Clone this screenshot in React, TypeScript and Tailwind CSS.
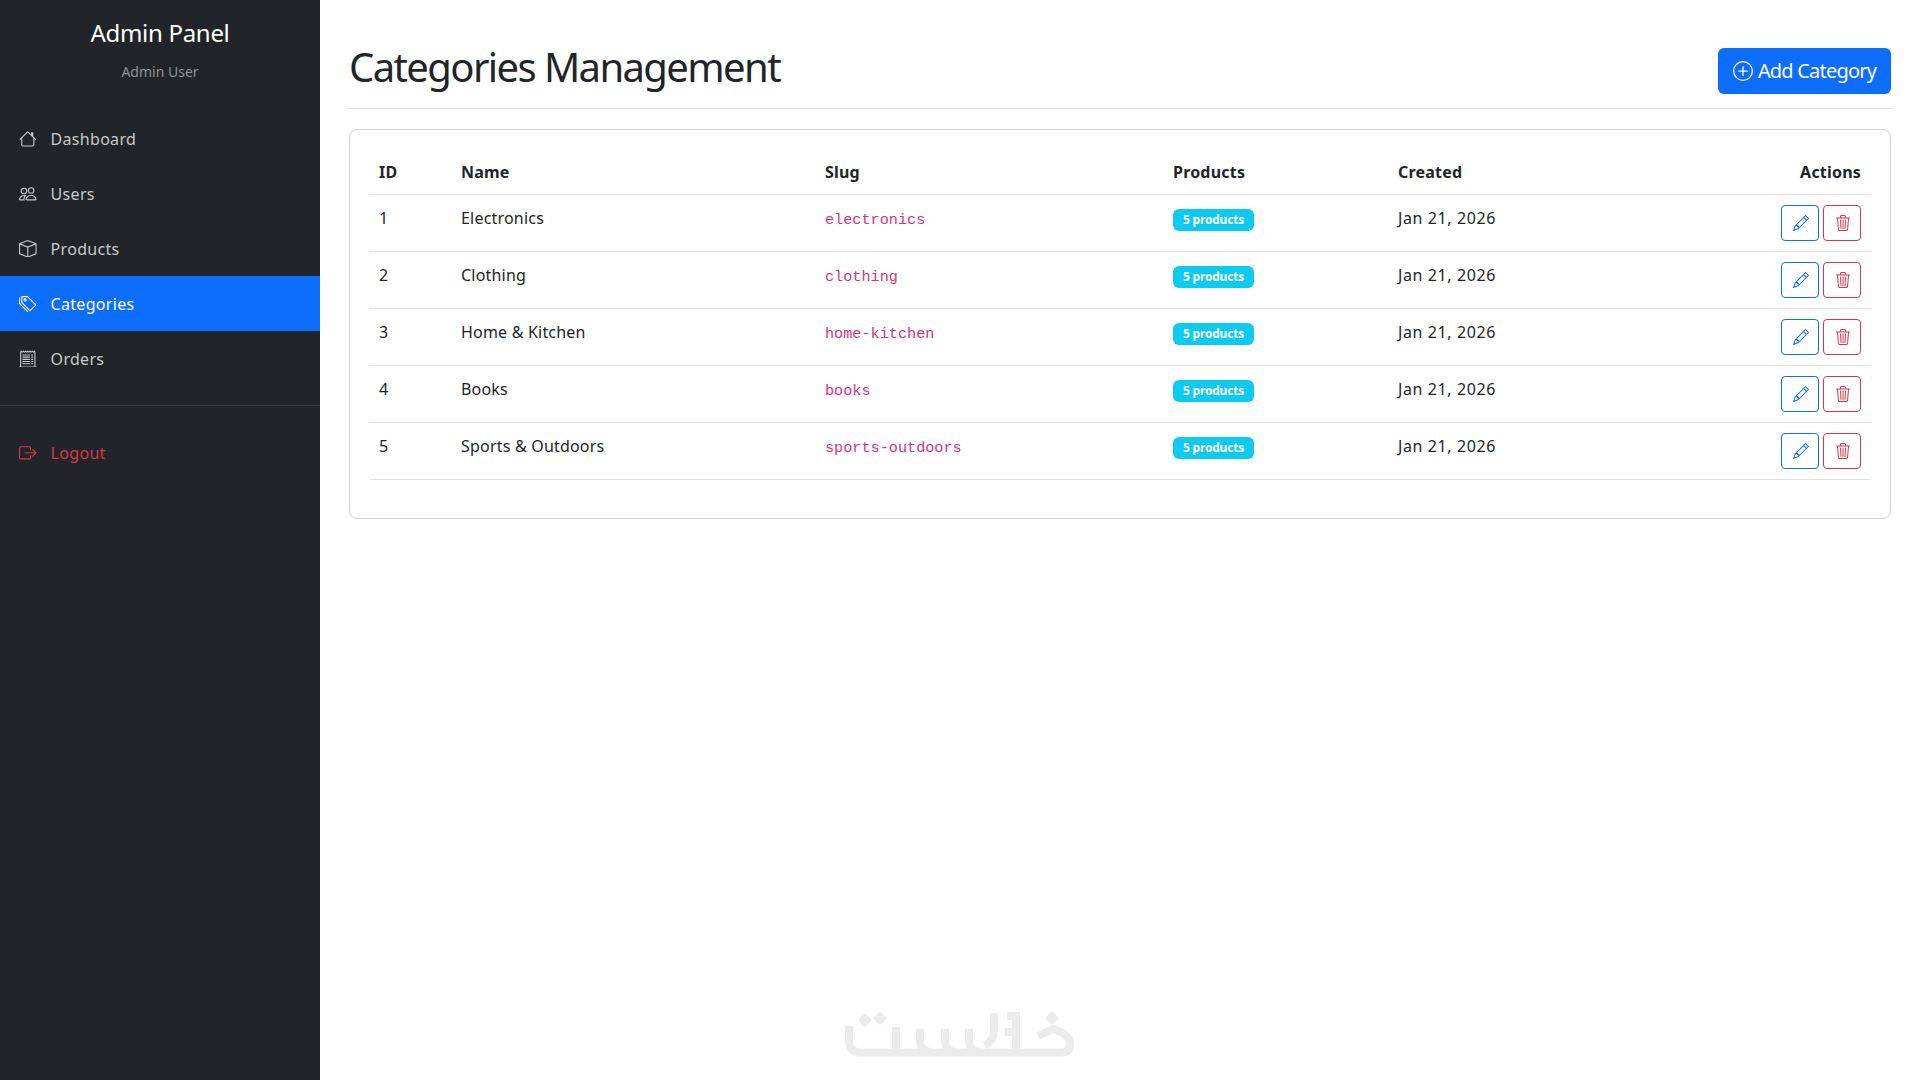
import { BsHouse, BsPeople, BsBox, BsTags, BsReceiptCutoff, BsBoxArrowRight, BsPlusCircle, BsPencil, BsTrash3 } from "react-icons/bs";

const nav = [
  { label: "Dashboard", Icon: BsHouse },
  { label: "Users", Icon: BsPeople },
  { label: "Products", Icon: BsBox },
  { label: "Categories", Icon: BsTags, active: true },
  { label: "Orders", Icon: BsReceiptCutoff },
];

const rows = [
  { id: 1, name: "Electronics", slug: "electronics" },
  { id: 2, name: "Clothing", slug: "clothing" },
  { id: 3, name: "Home & Kitchen", slug: "home-kitchen" },
  { id: 4, name: "Books", slug: "books" },
  { id: 5, name: "Sports & Outdoors", slug: "sports-outdoors" },
];

function Watermark() {
  return (
    <svg width="230" height="46" viewBox="0 0 230 46" fill="none" stroke="#ebebeb" strokeWidth="8">
      <path d="M4 14V28Q4 40.5 16 40.5H216Q225 40.5 225 32Q225 22 208 17L193 24" />
      <path d="M51 15V40M75 17V28Q75 40 87 40M100 17V28Q100 40 112 40M124 17V28Q124 40 136 40" />
      <path d="M149 1V18Q149 28 140 34M162 4H171V44M160 20H171" />
      <path d="M20 1l7 7-7 7-7-7zM35 -1l7 7-7 7-7-7zM207 -1l7 7-7 7-7-7z" fill="#ebebeb" stroke="none" />
    </svg>
  );
}

export default function App() {
  return (
    <div className="flex min-h-screen bg-white text-[#212529] font-['Noto_Sans',sans-serif] text-base leading-6">
      <aside className="w-[320px] shrink-0 bg-[#212529] text-white">
        <div className="pt-[16px] pb-[29px] text-center">
          <h1 className="text-[24px] leading-[34px] tracking-[-0.3px] font-normal">Admin Panel</h1>
          <p className="mt-[11px] text-[14px] leading-[21px] text-[#8f9296] tracking-[0px]">Admin User</p>
        </div>
        <nav className="flex flex-col">
          {nav.map(({ label, Icon, active }) => (
            <a
              key={label}
              className={`flex h-[55px] items-center pl-[19px] ${active ? "bg-[#0d6efd] text-white" : "text-[#ffffffbf]"}`}
            >
              <Icon className="mr-[14px] h-[17.6px] w-[17.6px]" />
              <span className="pt-[1px] tracking-[0.3px]">{label}</span>
            </a>
          ))}
        </nav>
        <div className="mt-[19px] border-t border-[#3c4043]" />
        <a className="mt-[19px] flex h-[55px] items-center pl-[19px] text-[#dc3545]">
          <BsBoxArrowRight className="mr-[14px] h-[17.6px] w-[17.6px]" />
          <span className="tracking-[0.3px]">Logout</span>
        </a>
      </aside>
      <main className="relative flex-1 px-[29px]">
        <header className="mt-[48px] flex h-[61px] items-start justify-between border-b border-[#dee2e6]">
          <h2 className="mt-[-5px] text-[40px] leading-[48px] font-normal tracking-[-1.6px]">Categories Management</h2>
          <button className="flex h-[46px] w-[173px] items-center justify-center gap-[5px] rounded-[6px] bg-[#0d6efd] text-[20px] leading-[30px] text-white">
            <BsPlusCircle className="h-[20px] w-[20px]" />
            <span className="tracking-[-0.8px]">Add Category</span>
          </button>
        </header>
        <section className="mt-[20px] rounded-[8px] border border-[#d3d4d5] px-[19px] pt-[20px] pb-[38px]">
          <table className="w-full table-fixed border-collapse">
            <colgroup>
              <col className="w-[82px]" />
              <col className="w-[364px]" />
              <col className="w-[348px]" />
              <col className="w-[225px]" />
              <col />
            </colgroup>
            <thead>
              <tr className="border-b border-[#dee2e6] text-left">
                <th className="p-[10px] font-bold tracking-[0.2px]">ID</th>
                <th className="p-[10px] font-bold tracking-[0.2px]">Name</th>
                <th className="p-[10px] font-bold tracking-[0.2px]">Slug</th>
                <th className="p-[10px] font-bold tracking-[0.2px]">Products</th>
                <th className="p-[10px] font-bold tracking-[0.2px]">Created</th>
                <th className="p-[10px] text-right font-bold tracking-[0.2px]">Actions</th>
              </tr>
            </thead>
            <tbody>
              {rows.map((r) => (
                <tr key={r.id} className="h-[57px] border-b border-[#dee2e6]">
                  <td className="px-[10px] pt-[11px] pb-[10px] align-top tracking-[0.2px]">{r.id}</td>
                  <td className="px-[10px] pt-[11px] pb-[10px] align-top tracking-[0.2px]">{r.name}</td>
                  <td className="px-[10px] pt-[13px] pb-[10px] align-top font-['Liberation_Mono',monospace] text-[15.2px] text-[#d63384]">{r.slug}</td>
                  <td className="px-[10px] pt-[14px] pb-[9px] align-top">
                    <span className="flex h-[22px] w-[81px] items-center justify-center rounded-[6px] bg-[#0dcaf0] text-[12px] font-bold text-white tracking-[-0.2px]">5 products</span>
                  </td>
                  <td className="px-[10px] pt-[11px] pb-[10px] align-top tracking-[0.6px]">Jan 21, 2026</td>
                  <td className="p-[10px] align-top">
                    <div className="flex justify-end gap-[4px]">
                      <button className="flex h-[36px] w-[38px] items-center justify-center rounded-[4px] border border-[#0d6efd] text-[#0d6efd]">
                        <BsPencil className="ml-[1px] h-[16px] w-[16px]" />
                      </button>
                      <button className="flex h-[36px] w-[38px] items-center justify-center rounded-[4px] border border-[#dc3545] text-[#dc3545]">
                        <BsTrash3 className="ml-[1px] h-[16px] w-[16px]" />
                      </button>
                    </div>
                  </td>
                </tr>
              ))}
            </tbody>
          </table>
        </section>
        <div className="absolute bottom-[22px] left-[525px] h-[46px]">
          <Watermark />
        </div>
      </main>
    </div>
  );
}
